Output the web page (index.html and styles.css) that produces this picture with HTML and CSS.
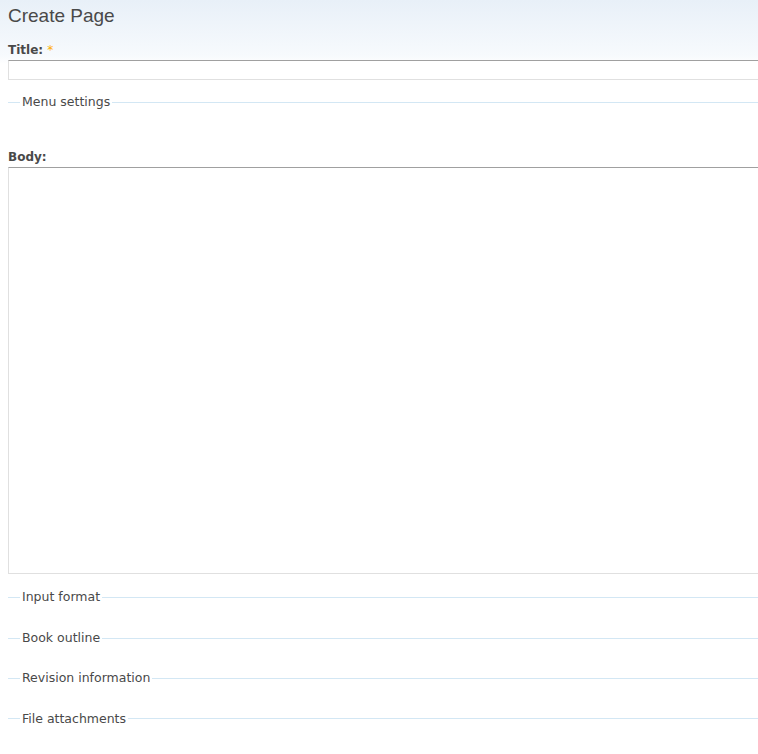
FILE: index.html
```html
<!DOCTYPE html>
<html lang="en">
<head>
    <meta charset="UTF-8">
    <meta name="viewport" content="width=device-width, initial-scale=1.0">
    <title>Create Page</title>
    <link rel="stylesheet" href="styles.css">
</head>
<body>
    <div class="page">
        <h2 class="page-title">Create Page</h2>

        <form id="node-form" class="node-form">
            <div class="form-item">
                <label for="edit-title">Title: <span class="form-required" title="This field is required.">*</span></label>
                <input type="text" id="edit-title" name="title" class="form-text">
            </div>

            <fieldset class="collapsible collapsed menu-settings">
                <legend>Menu settings</legend>
            </fieldset>

            <div class="form-item body-field">
                <label for="edit-body">Body:</label>
                <textarea id="edit-body" name="body" class="form-textarea"></textarea>
            </div>

            <fieldset class="collapsible collapsed">
                <legend>Input format</legend>
            </fieldset>

            <fieldset class="collapsible collapsed">
                <legend>Book outline</legend>
            </fieldset>

            <fieldset class="collapsible collapsed">
                <legend>Revision information</legend>
            </fieldset>

            <fieldset class="collapsible collapsed">
                <legend>File attachments</legend>
            </fieldset>
        </form>
    </div>
</body>
</html>
```

FILE: styles.css
```css
* {
    margin: 0;
    padding: 0;
    box-sizing: border-box;
}

html, body {
    height: 100%;
}

body {
    font-family: 'DejaVu Sans', Verdana, sans-serif;
    font-size: 12px;
    line-height: 1.7;
    color: #494949;
    background: linear-gradient(#e8f0f8 0, #f7fafd 56px, #ffffff 64px) no-repeat;
    overflow: hidden;
}

.page {
    padding: 4px 0 0 8px;
    overflow: hidden;
}

.page-title {
    font-family: 'Liberation Sans', Arial, sans-serif;
    font-size: 19px;
    font-weight: normal;
    line-height: 24px;
    color: #494949;
}

.node-form {
    width: 820px;
}

.form-item {
    margin-top: 12px;
}

label {
    display: block;
    font-weight: bold;
    line-height: 20px;
}

.form-required {
    color: #ffae00;
    font-weight: normal;
}

.form-text,
.form-textarea {
    display: block;
    width: 100%;
    border: 1px solid #e0e0e0;
    border-top-color: #a0a0a0;
    background: #ffffff;
    font-family: inherit;
    font-size: 12px;
    color: #494949;
}

.form-text {
    height: 20px;
}

.form-textarea {
    height: 407px;
    resize: none;
}

fieldset {
    border: 0;
    border-top: 1px solid #d3e7f4;
    padding: 0 0 0 12px;
    margin: 0 0 20px;
    min-width: 0;
}

fieldset legend {
    padding: 0 2px;
    font-size: 12.5px;
    line-height: 20.4px;
    color: #494949;
}

.menu-settings {
    margin-top: 12px;
    margin-bottom: 35px;
}

.body-field {
    margin-top: 0;
    margin-bottom: 13px;
}
```
